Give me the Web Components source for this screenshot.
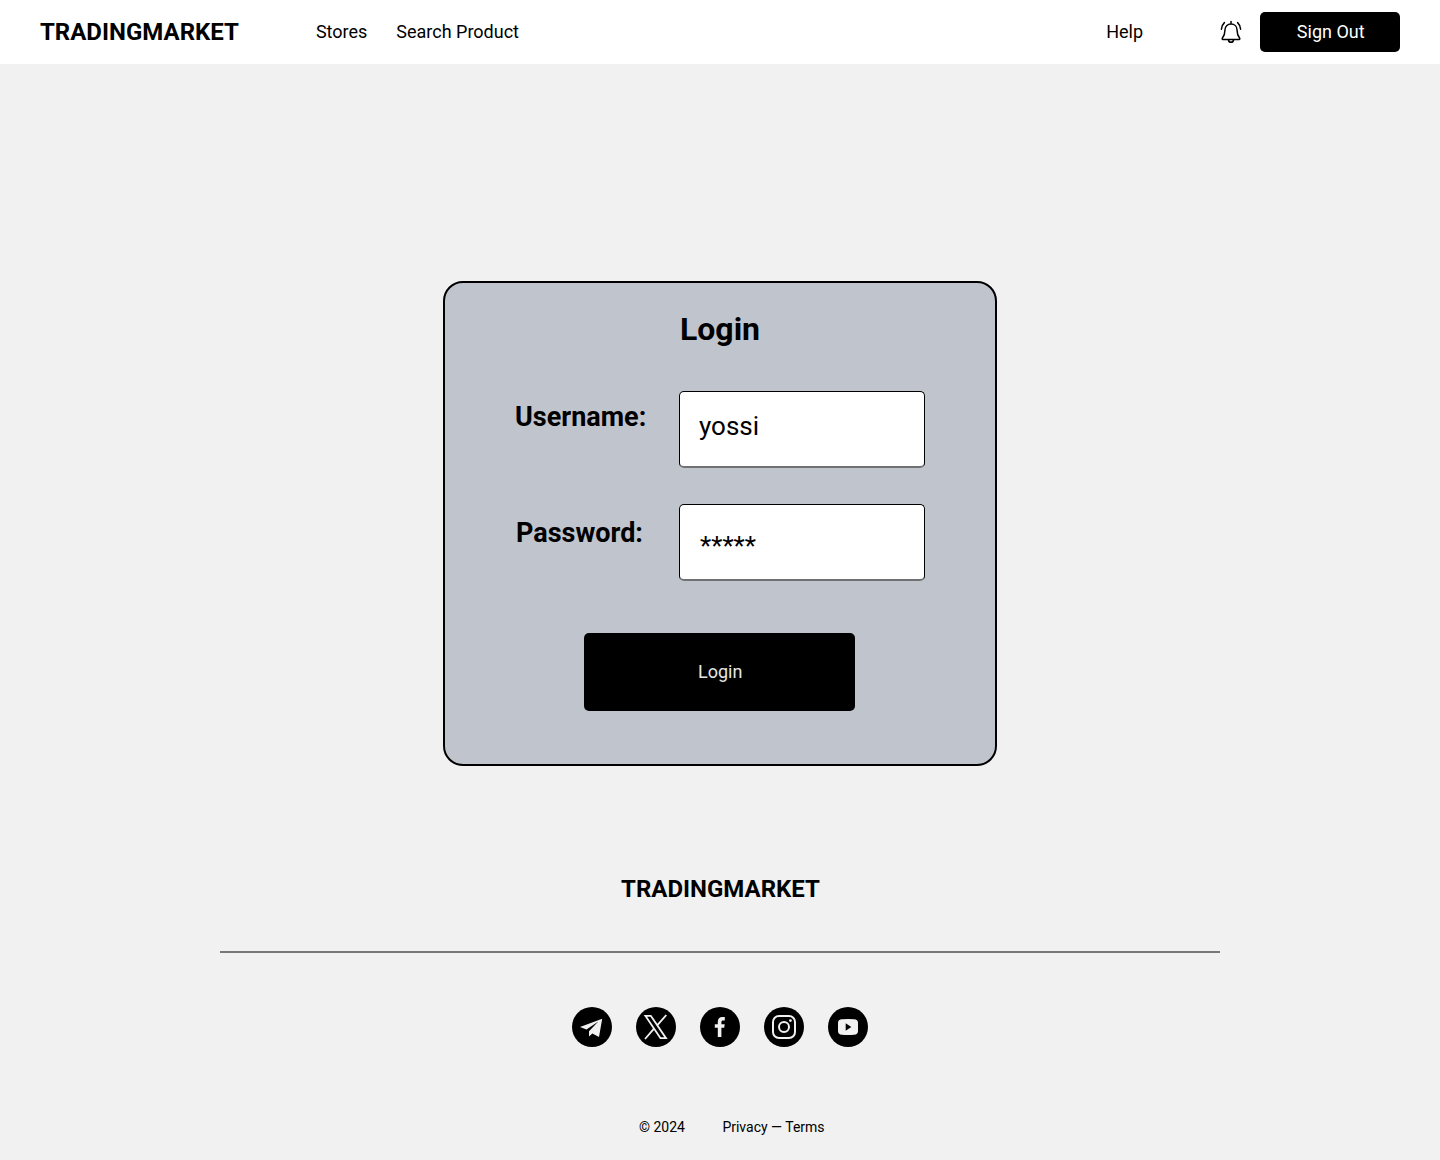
<!DOCTYPE html>
<html lang="en">
<head>
<meta charset="utf-8">
<title>TradingMarket – Login</title>
<style>
html,body{margin:0;height:100%}
body{font-family:Roboto,"Liberation Sans",sans-serif;color:#000;background:#f1f1f1;font-size:18px;line-height:24px}
</style>
</head>
<body>
<tm-app></tm-app>
<script>
const define = (name, html) => {
  const t = document.createElement('template');
  t.innerHTML = html;
  customElements.define(name, class extends HTMLElement {
    constructor() {
      super();
      this.attachShadow({ mode: 'open' }).append(t.content.cloneNode(true));
    }
  });
};

define('tm-logo', `<style>:host{display:block;font-size:24px;line-height:32px;font-weight:700;white-space:nowrap}</style>TRADINGMARKET`);

define('tm-button', `<style>
:host{display:flex;width:var(--w,140px);height:var(--h,40px)}
button{flex:1;border:0;border-radius:5px;background:#000;color:var(--fg,#fff);font:inherit;padding:0 0 0 1.500px}
</style><button><slot></slot></button>`);

define('tm-bell', `<style>:host{display:block;width:22px;height:24px}svg{display:block}</style>
<svg width="22" height="24" viewBox="0 0 22 24" fill="none" stroke="#000" stroke-width="1.5" stroke-linecap="round" stroke-linejoin="round">
<path d="M11 1.500V4M11 4C7.400 4 5 6.500 5 9.800C5 13.500 4.600 15.400 2.300 18.300C2 18.800 2.200 19.500 2.800 19.500H19.200C19.800 19.500 20 18.800 19.700 18.300C17.400 15.400 17 13.500 17 9.800C17 6.500 14.600 4 11 4ZM8.400 20C9 23 13 23 13.600 20M4.400 2.600C2.700 4.200 1.600 6.200 1.400 9.200M17.600 2.600C19.300 4.200 20.400 6.200 20.600 9.200"/></svg>`);

define('tm-header', `<style>
:host{display:flex;align-items:center;height:64px;box-sizing:border-box;padding:0 40px;background:#fff}
nav{display:flex;gap:29px;margin-left:77px}
.right{display:flex;align-items:center;margin-left:auto}
tm-bell{margin:0 18px 0 77px}
</style><tm-logo></tm-logo><nav><span>Stores</span><span>Search Product</span></nav>
<div class="right"><span>Help</span><tm-bell></tm-bell><tm-button>Sign Out</tm-button></div>`);

define('tm-field', `<style>
:host{display:flex;align-items:flex-start;height:77px}
label{width:164px;font-size:27px;line-height:32px;font-weight:700;white-space:nowrap;padding:var(--lt,10px) 0 0 var(--ll,0);box-sizing:border-box}
.box{width:246px;height:77px;box-sizing:border-box;border:1px solid #000;border-bottom:2px solid #707172;border-radius:5px;background:#fff;font-size:26px;line-height:32px;padding:var(--vt,18px) 0 0 var(--vl,19px)}
</style><label><slot name="label"></slot></label><div class="box"><slot></slot></div>`);

define('tm-login', `<style>
:host{display:flex;flex-direction:column;width:554px;height:485px;box-sizing:border-box;border:2px solid #000;border-radius:20px;background:#c0c4cc;padding:26px 70px 0}
h1{margin:0;font-size:32px;line-height:40px;font-weight:700;text-align:center}
form{display:flex;flex-direction:column;gap:36px;margin:42px 0 0}
tm-field+tm-field{--lt:13px;--ll:1px;--vt:25px;--vl:20px}
tm-button{--w:271px;--h:78px;--fg:#e6e6e6;margin:52px 0 0 69px}
</style><h1>Login</h1><form>
<tm-field><span slot="label">Username:</span>yossi</tm-field>
<tm-field><span slot="label">Password:</span>*****</tm-field>
</form><tm-button>Login</tm-button>`);

define('tm-social', `<style>:host{display:flex;justify-content:center;gap:24px}svg{display:block}</style>
<svg width="40" height="40"><circle cx="20" cy="20" r="20"/><path fill="#f1f1f1" d="M30.200 11.700L8 20L14.500 22.600L26.300 14.600L17 24.200V29.500L20.400 26.400L27 30Z"/></svg>
<svg width="40" height="40"><circle cx="20" cy="20" r="20"/><path fill="none" stroke="#f1f1f1" stroke-width="1.800" d="M9.400 8.800H14.800L30 31.200H24.500ZM30.300 8L21.200 18.300M18 21.600L9 32"/></svg>
<svg width="40" height="40"><circle cx="20" cy="20" r="20"/><path fill="#f1f1f1" d="M17.800 30V20.700H14.800V17.300H17.800V14.800C17.800 11.800 19.500 10.100 22.300 10.100H24.800V13.600H23.100C21.900 13.600 21.400 14.200 21.400 15.300V17.300H24.700L24.200 20.700H21.400V30Z"/></svg>
<svg width="40" height="40"><circle cx="20" cy="20" r="20"/><g fill="none" stroke="#f1f1f1" stroke-width="2"><rect x="9" y="9" width="22" height="22" rx="6"/><circle cx="20" cy="20" r="5"/></g><circle cx="26.400" cy="13.600" r="1.400" fill="#f1f1f1"/></svg>
<svg width="40" height="40"><circle cx="20" cy="20" r="20"/><path fill="#f1f1f1" d="M14 12.300Q20 11.800 26 12.300Q30 12.300 30 16V24Q30 27.600 26 27.700Q20 28.200 14 27.700Q10 27.600 10 24V16Q10 12.300 14 12.300Z"/><path d="M17.700 16.200L23.300 20L17.700 23.800Z"/></svg>`);

define('tm-footer', `<style>
:host{display:flex;flex-direction:column;align-items:center}
tm-logo{padding-left:1px}
hr{width:1000px;height:2px;border:0;margin:46px 0 54px;background:#777}
.legal{display:flex;gap:37.500px;margin:70px 0 0 23.500px;font-size:14px;line-height:20px}
</style><tm-logo></tm-logo><hr><tm-social></tm-social><div class="legal"><span>© 2024</span><span>Privacy — Terms</span></div>`);

define('tm-app', `<style>
:host{display:flex;flex-direction:column;height:1160px;overflow:hidden}
tm-login{margin:217px auto 107px;flex:none}
</style><tm-header></tm-header><tm-login></tm-login><tm-footer></tm-footer>`);
</script>
</body>
</html>
